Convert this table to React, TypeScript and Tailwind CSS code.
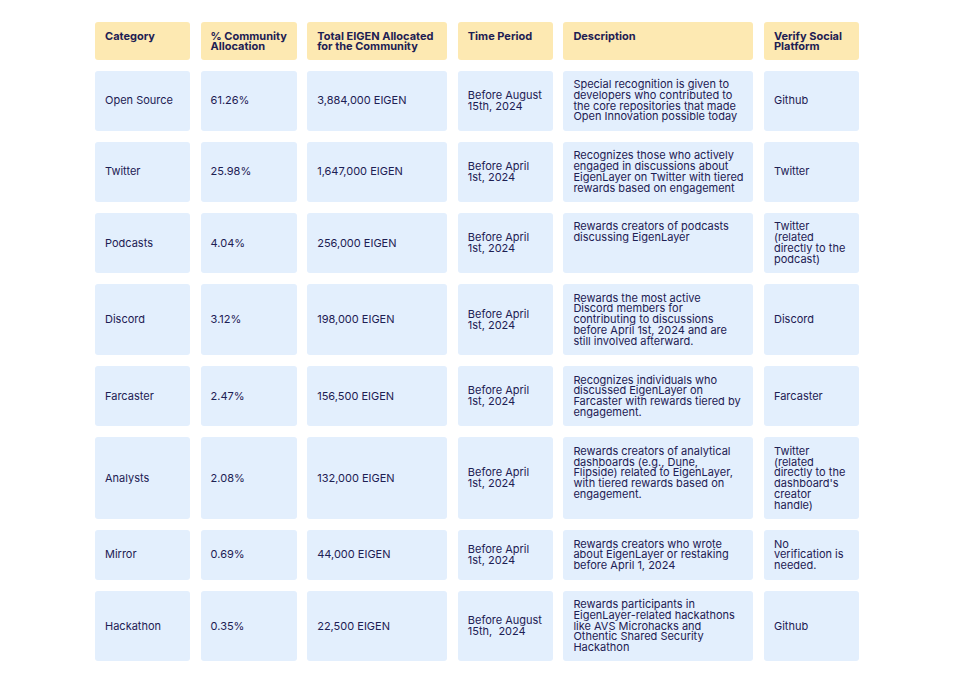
const headers = [
  "Category",
  "% Community\nAllocation",
  "Total EIGEN Allocated\nfor the Community",
  "Time Period",
  "Description",
  "Verify Social\nPlatform",
]

const rows: string[][] = [
  [
    "Open Source",
    "61.26%",
    "3,884,000 EIGEN",
    "Before August\n15th, 2024",
    "Special recognition is given to\ndevelopers who contributed to\nthe core repositories that made\nOpen Innovation possible today",
    "Github",
  ],
  [
    "Twitter",
    "25.98%",
    "1,647,000 EIGEN",
    "Before April\n1st, 2024",
    "Recognizes those who actively\nengaged in discussions about\nEigenLayer on Twitter with tiered\nrewards based on engagement",
    "Twitter",
  ],
  [
    "Podcasts",
    "4.04%",
    "256,000 EIGEN",
    "Before April\n1st, 2024",
    "Rewards creators of podcasts\ndiscussing EigenLayer",
    "Twitter\n(related\ndirectly to the\npodcast)",
  ],
  [
    "Discord",
    "3.12%",
    "198,000 EIGEN",
    "Before April\n1st, 2024",
    "Rewards the most active\nDiscord members for\ncontributing to discussions\nbefore April 1st, 2024 and are\nstill involved afterward.",
    "Discord",
  ],
  [
    "Farcaster",
    "2.47%",
    "156,500 EIGEN",
    "Before April\n1st, 2024",
    "Recognizes individuals who\ndiscussed EigenLayer on\nFarcaster with rewards tiered by\nengagement.",
    "Farcaster",
  ],
  [
    "Analysts",
    "2.08%",
    "132,000 EIGEN",
    "Before April\n1st, 2024",
    "Rewards creators of analytical\ndashboards (e.g., Dune,\nFlipside) related to EigenLayer,\nwith tiered rewards based on\nengagement.",
    "Twitter\n(related\ndirectly to the\ndashboard's\ncreator\nhandle)",
  ],
  [
    "Mirror",
    "0.69%",
    "44,000 EIGEN",
    "Before April\n1st, 2024",
    "Rewards creators who wrote\nabout EigenLayer or restaking\nbefore April 1, 2024",
    "No\nverification is\nneeded.",
  ],
  [
    "Hackathon",
    "0.35%",
    "22,500 EIGEN",
    "Before August\n15th,  2024",
    "Rewards participants in\nEigenLayer-related hackathons\nlike AVS Microhacks and\nOthentic Shared Security\nHackathon",
    "Github",
  ],
]

export default function App() {
  return (
    <div
      className="min-h-[686px] bg-white pl-[95px] pt-[22px] pb-[25px] text-[11px] leading-[10.8px] text-[#1d2053]"
      style={{ fontFamily: "Inter, 'Noto Sans', sans-serif" }}
    >
      <div className="grid w-[764px] grid-cols-[95px_96px_140px_95px_190px_95px] gap-x-[10.6px] gap-y-[11px]">
        {/* Header row */}
        {headers.map((h) => (
          <div key={h} className="whitespace-pre rounded-[3px] bg-[#fde9b2] px-[10px] pt-[8.5px] pb-[7.5px] font-bold">
            {h}
          </div>
        ))}

        {/* Body rows — description is top aligned, the rest centred */}
        {rows.map((row) =>
          row.map((cell, i) => (
            <div
              key={row[0] + i}
              className={`flex rounded-[3px] bg-[#e3effd] px-[10px] py-[8.5px] ${
                i === 4 ? "items-start" : "items-center"
              }`}
            >
              <span className="whitespace-pre">{cell}</span>
            </div>
          ))
        )}
      </div>
    </div>
  )
}
